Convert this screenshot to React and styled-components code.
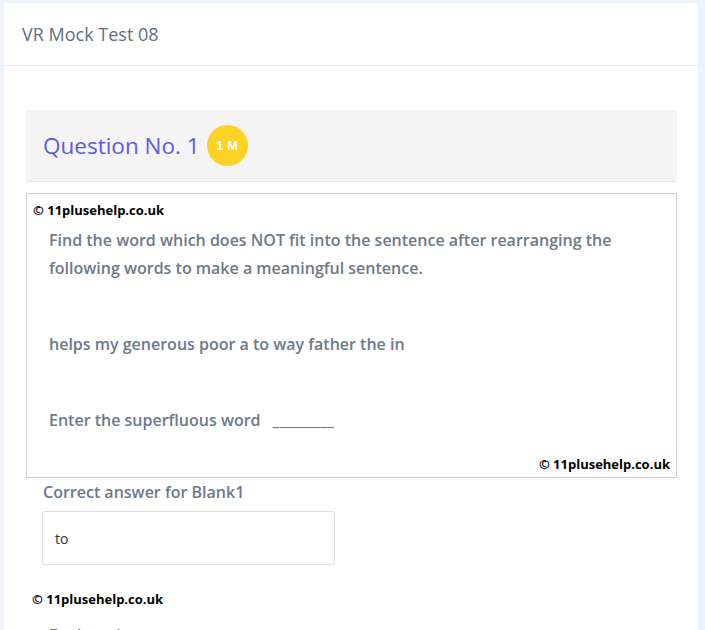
import React from "react";
import styled, { createGlobalStyle } from "styled-components";

const GlobalStyle = createGlobalStyle`
  html, body {
    margin: 0;
    padding: 0;
    background: #eef3fa;
    font-family: "Open Sans", "Noto Sans", sans-serif;
  }
`;

const Page = styled.div`
  padding: 3px 7px 0 4px;
  height: 630px;
  overflow: hidden;
  box-sizing: border-box;
`;

const Card = styled.div`
  background: #ffffff;
  min-height: 700px;
`;

const CardHeader = styled.div`
  height: 62px;
  display: flex;
  align-items: center;
  padding: 0 18px;
  border-bottom: 1px solid #e9ecef;
`;

const PageTitle = styled.h1`
  margin: 0;
  font-size: 18px;
  font-weight: 400;
  color: #5f6e80;
`;

const CardBody = styled.div`
  padding: 44px 21px 0 22px;
`;

const QuestionHead = styled.div`
  height: 71px;
  background: #f4f4f4;
  border-bottom: 1px solid #e3e8ee;
  display: flex;
  align-items: center;
  gap: 7px;
  padding: 0 17px;
  margin-bottom: 11px;
`;

const QuestionTitle = styled.h2`
  margin: 0;
  font-size: 22.5px;
  font-weight: 400;
  color: #5c5ce0;
`;

const Badge = styled.span`
  width: 41px;
  height: 41px;
  border-radius: 50%;
  background: #fed225;
  color: #fff;
  font-family: "Liberation Sans", Arial, sans-serif;
  font-weight: 700;
  font-size: 13px;
  display: flex;
  align-items: center;
  justify-content: center;
`;

const QuestionBox = styled.div`
  border: 1px solid #cfcfcf;
  padding: 7px 6px 4px 6px;
`;

const Copyright = styled.div`
  font-size: 13px;
  font-weight: 700;
  line-height: 18px;
  color: #000;
  text-align: ${(p) => p.$align || "left"};
`;

const Content = styled.div`
  padding: 7px 16px 21px 16px;
`;

const Para = styled.p`
  margin: 0 0 48px 0;
  font-size: 16px;
  font-weight: 600;
  line-height: 28px;
  color: #6b7a8b;

  &:last-child {
    margin-bottom: 0;
  }
`;

const Blank = styled.span`
  margin-left: 12px;
`;

const AnswerLabel = styled.div`
  font-size: 16px;
  font-weight: 600;
  color: #6b7a8b;
  padding: 3px 0 0 17px;
  line-height: 22px;
`;

const AnswerInput = styled.div`
  width: 293px;
  height: 54px;
  box-sizing: border-box;
  margin: 8px 0 0 16px;
  border: 1px solid #dadde3;
  border-radius: 3px;
  display: flex;
  align-items: center;
  padding: 0 12px;
  font-size: 14px;
  color: #333;
`;

const Footnote = styled(Copyright)`
  margin: 25px 0 0 6px;
`;

const SectionTitle = styled.div`
  font-size: 16px;
  font-weight: 600;
  color: #6b7a8b;
  padding: 16px 0 0 23px;
`;

export default function App() {
  return (
    <>
      <GlobalStyle />
      <Page>
        <Card>
          <CardHeader>
            <PageTitle>VR Mock Test 08</PageTitle>
          </CardHeader>
          <CardBody>
            <QuestionHead>
              <QuestionTitle>Question No. 1</QuestionTitle>
              <Badge>1 M</Badge>
            </QuestionHead>
            <QuestionBox>
              <Copyright>© 11plusehelp.co.uk</Copyright>
              <Content>
                <Para>
                  Find the word which does NOT fit into the sentence after rearranging the
                  following words to make a meaningful sentence.
                </Para>
                <Para>helps my generous poor a to way father the in</Para>
                <Para>
                  Enter the superfluous word<Blank>_________</Blank>
                </Para>
              </Content>
              <Copyright $align="right">© 11plusehelp.co.uk</Copyright>
            </QuestionBox>
            <AnswerLabel>Correct answer for Blank1</AnswerLabel>
            <AnswerInput>to</AnswerInput>
            <Footnote>© 11plusehelp.co.uk</Footnote>
            <SectionTitle>Explanation</SectionTitle>
          </CardBody>
        </Card>
      </Page>
    </>
  );
}
